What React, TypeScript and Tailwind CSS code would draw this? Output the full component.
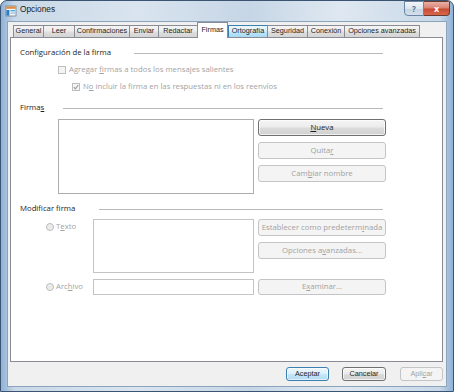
import React from 'react'

const ui = "font-['Liberation_Sans',Arial,sans-serif]"
const body = "font-['Open_Sans','Noto_Sans',sans-serif]"

const tabs = [
    { label: 'General', w: 'w-[30px]' },
    { label: 'Leer', w: 'w-[31px]' },
    { label: 'Confirmaciones', w: 'w-[55px]' },
    { label: 'Enviar', w: 'w-[29px]' },
    { label: 'Redactar', w: 'w-[39px]' },
    { label: 'Firmas', w: 'w-[31px]', active: true },
    { label: 'Ortografía', w: 'w-[39px]', hover: true },
    { label: 'Seguridad', w: 'w-[40px]' },
    { label: 'Conexión', w: 'w-[37px]' },
    { label: 'Opciones avanzadas', w: 'w-[76px]', last: true },
]

const btnOn =
    'border border-[#707070] rounded-[3px] bg-[linear-gradient(to_bottom,#f4f4f4_0%,#ececec_48%,#dcdcdc_52%,#d0d0d0_100%)] shadow-[inset_0_0_0_1px_rgba(255,255,255,0.7)] text-[#1e1e1e]'
const btnOff = 'border border-[#c2c4c6] rounded-[3px] bg-[#f4f4f4] text-[#a2a2a2]'

function U({ children }: { children: React.ReactNode }) {
    return <span className="underline underline-offset-[1px] decoration-[0.5px]">{children}</span>
}

function Header({ children, gap }: { children: React.ReactNode; gap: string }) {
    return (
        <div className={`flex items-center h-[12px] w-[363px] text-[7.75px] text-[#1e1e1e] ${body}`}>
            <span className="whitespace-nowrap leading-none">{children}</span>
            <div className={`flex-1 h-px bg-[#b9b9b9] ${gap}`} />
        </div>
    )
}

function Radio() {
    return <div className="w-[8px] h-[8px] rounded-full border border-[#b8b8b8] bg-[radial-gradient(circle,#e6e6e6_0%,#f6f6f6_100%)] shrink-0" />
}

export default function App() {
    return (
        <div className="w-[454px] h-[392px] flex flex-col border border-[#3a5472] rounded-t-[7px] overflow-hidden bg-[linear-gradient(to_right,#8fb2d6_0%,#c9d8e7_3%,#d9e4ef_30%,#c6d6e6_55%,#dfe8f1_75%,#c8d8e8_97%,#8fb2d6_100%)]">
            {/* title bar */}
            <div className="h-[20px] flex items-start pl-[4px] pr-[3px] shrink-0">
                <svg width="12" height="12" viewBox="0 0 12 12" className="mt-[4px]">
                    <rect x="1" y="1" width="10" height="10" fill="#f4f6f8" stroke="#6c7f92" strokeWidth="0.8" />
                    <rect x="1.4" y="1.4" width="9.2" height="2.4" fill="#e08a3c" />
                    <rect x="1.4" y="5" width="3" height="5.6" fill="#2f7cc4" />
                    <rect x="5.4" y="5" width="4.6" height="1.4" fill="#57a9d8" />
                    <rect x="5.4" y="7.4" width="4.6" height="1.4" fill="#9cc7e4" />
                </svg>
                <span className={`ml-[3px] mt-[2px] text-[8.3px] leading-[12px] text-[#1a1a1a] ${ui}`}>Opciones</span>
                <div className="ml-auto flex">
                    <div className="w-[20px] h-[15px] border border-[#6b86a3] rounded-bl-[4px] bg-[linear-gradient(to_bottom,#f3f6f9_0%,#dde6ef_50%,#c5d3e1_52%,#d4e0ec_100%)] flex items-center justify-center text-[8px] font-bold text-[#5a7592] leading-none">
                        ?
                    </div>
                    <div className="w-[26px] h-[15px] border border-l-0 border-[#6b3a30] rounded-br-[4px] bg-[linear-gradient(to_bottom,#e9b2a6_0%,#d98070_48%,#c54a33_52%,#d9674b_100%)] flex items-center justify-center text-white text-[9px] font-bold leading-none">
                        x
                    </div>
                </div>
            </div>

            <div className="flex-1 px-[6px] pb-[4px] flex flex-col">
                <div className="flex-1 flex flex-col bg-[#f0f0f0] border border-[#8ca3bc] pl-[2px] pr-[3px]">
                    {/* tabs */}
                    <div className="relative z-10 flex items-end h-[15px] ml-[3px]">
                        {tabs.map((t) =>
                            t.active ? (
                                <div
                                    key={t.label}
                                    className={`${t.w} h-[16px] -mb-px bg-white border border-b-0 border-[#898c95] flex items-center justify-center pb-[1px] text-[7.25px] text-[#1e1e1e] ${ui}`}
                                >
                                    {t.label}
                                </div>
                            ) : (
                                <div
                                    key={t.label}
                                    className={`${t.w} h-[12px] border-t border-l ${t.last ? 'border-r' : ''} ${
                                        t.hover
                                            ? 'border-[#3c7fb1] bg-[linear-gradient(to_bottom,#eaf6fd_0%,#d9f0fc_48%,#bee6fd_52%,#a7d9f5_100%)]'
                                            : 'border-[#898c95] bg-[linear-gradient(to_bottom,#f4f4f4_0%,#ececec_48%,#dfdfdf_52%,#d4d4d4_100%)]'
                                    } flex items-center justify-center text-[7.25px] text-[#1e1e1e] whitespace-nowrap ${ui}`}
                                >
                                    {t.label}
                                </div>
                            ),
                        )}
                    </div>

                    {/* panel */}
                    <div className={`h-[325px] bg-white border border-[#898c95] pl-[9px] pt-[9px] flex flex-col text-[7.75px] ${body}`}>
                        <Header gap="ml-[23px]">Configuración de la firma</Header>

                        <div className="flex items-center h-[12px] mt-[5px] ml-[38px] text-[#a3a3a3]">
                            <div className="w-[8px] h-[8px] border border-[#bdbdbd] bg-[#f4f4f4] shrink-0" />
                            <span className="ml-[3px] whitespace-nowrap leading-none">
                                Agregar <U>f</U>irmas a todos los mensajes salientes
                            </span>
                        </div>
                        <div className="flex items-center h-[12px] mt-[5px] ml-[52px] text-[#a3a3a3]">
                            <div className="w-[8px] h-[8px] border border-[#bdbdbd] bg-[#f4f4f4] shrink-0 flex items-center justify-center">
                                <svg width="6" height="6" viewBox="0 0 6 6">
                                    <path d="M0.8 3.2 L2.4 4.8 L5.3 1" fill="none" stroke="#9a9a9a" strokeWidth="1.1" />
                                </svg>
                            </div>
                            <span className="ml-[3px] whitespace-nowrap leading-none">
                                N<U>o</U> incluir la firma en las respuestas ni en los reenvíos
                            </span>
                        </div>

                        <div className="mt-[9px]">
                            <Header gap="ml-[19px]">
                                Firma<U>s</U>
                            </Header>
                        </div>

                        <div className="flex mt-[5px] ml-[38px]">
                            <div className="w-[196px] h-[75px] border border-[#adadad] bg-white" />
                            <div className="ml-[4px] w-[128px] flex flex-col gap-[6px]">
                                <div className={`h-[17px] flex items-center justify-center ${btnOn}`}>
                                    <U>N</U>ueva
                                </div>
                                <div className={`h-[17px] flex items-center justify-center ${btnOff}`}>
                                    Quita<U>r</U>
                                </div>
                                <div className={`h-[17px] flex items-center justify-center ${btnOff}`}>
                                    Cam<U>b</U>iar nombre
                                </div>
                            </div>
                        </div>

                        <div className="mt-[9px]">
                            <Header gap="ml-[24px]">Modificar firma</Header>
                        </div>

                        <div className="flex mt-[4px] text-[#a3a3a3]">
                            <div className="w-[73px] flex items-center h-[12px] mt-[2px] pl-[26px]">
                                <Radio />
                                <span className="ml-[2px] leading-none">
                                    T<U>e</U>xto
                                </span>
                            </div>
                            <div className="w-[161px] h-[54px] border border-[#c4c4c4] bg-white" />
                            <div className="ml-[4px] w-[128px] flex flex-col gap-[6px]">
                                <div className={`h-[17px] flex items-center justify-center whitespace-nowrap ${btnOff}`}>
                                    Establecer como predeterm<U>i</U>nada
                                </div>
                                <div className={`h-[17px] flex items-center justify-center ${btnOff}`}>
                                    Opciones a<U>v</U>anzadas...
                                </div>
                            </div>
                        </div>

                        <div className="flex items-center mt-[6px] text-[#a3a3a3]">
                            <div className="w-[73px] flex items-center pl-[26px]">
                                <Radio />
                                <span className="ml-[2px] leading-none">
                                    Arc<U>h</U>ivo
                                </span>
                            </div>
                            <div className="w-[161px] h-[16px] border border-[#c4c4c4] bg-white" />
                            <div className={`ml-[4px] w-[128px] h-[16px] flex items-center justify-center ${btnOff}`}>
                                E<U>x</U>aminar...
                            </div>
                        </div>
                    </div>

                    {/* dialog buttons */}
                    <div className={`flex justify-end mt-[5px] h-[14px] text-[7.25px] ${ui}`}>
                        <div className="w-[43px] flex items-center justify-center border border-[#3c7fb1] rounded-[3px] bg-[linear-gradient(to_bottom,#eef7fd_0%,#dcf0fb_48%,#c4e6f9_52%,#b3dcf3_100%)] shadow-[inset_0_0_0_1px_rgba(255,255,255,0.6)] text-[#1e1e1e]">
                            Aceptar
                        </div>
                        <div className={`w-[44px] ml-[13px] flex items-center justify-center ${btnOn}`}>Cancelar</div>
                        <div className={`w-[43px] ml-[14px] flex items-center justify-center ${btnOff}`}>
                            Apli<U>c</U>ar
                        </div>
                    </div>
                </div>
            </div>
        </div>
    )
}
